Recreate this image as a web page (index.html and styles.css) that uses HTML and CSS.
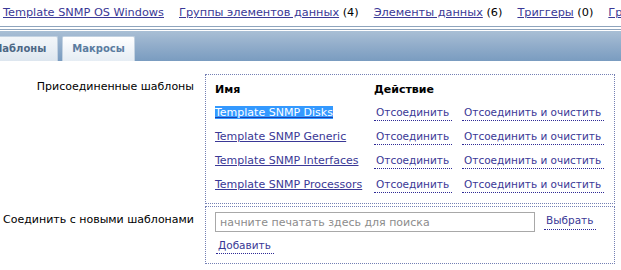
FILE: index.html
```html
<!DOCTYPE html>
<html lang="ru">
<head>
<meta charset="utf-8">
<title>Template SNMP OS Windows</title>
<link rel="stylesheet" href="styles.css">
</head>
<body>
<div class="topnav">
  <span class="navitem"><a class="navlink" href="#">Template SNMP OS Windows</a></span>
  <span class="navitem"><a class="navlink" href="#">Группы элементов данных</a> (4)</span>
  <span class="navitem"><a class="navlink" href="#">Элементы данных</a> (6)</span>
  <span class="navitem"><a class="navlink" href="#">Триггеры</a> (0)</span>
  <span class="navitem"><a class="navlink" href="#">Графики</a> (1)</span>
</div>
<div class="rule"></div>
<div class="tabbar">
  <div class="tab tab-active">Шаблоны</div>
  <div class="tab">Макросы</div>
</div>
<div class="form">
  <div class="frow">
    <div class="flabel flabel-first">Присоединенные шаблоны</div>
    <div class="fbox box-linked">
      <div class="ltable">
        <div class="th">Имя</div>
        <div class="th th-span">Действие</div>

        <div class="td"><a class="tlink tlink-selected" href="#">Template SNMP Disks</a></div>
        <div class="td"><a class="alink" href="#">Отсоединить</a></div>
        <div class="td"><a class="alink" href="#">Отсоединить и очистить</a></div>

        <div class="td"><a class="tlink" href="#">Template SNMP Generic</a></div>
        <div class="td"><a class="alink" href="#">Отсоединить</a></div>
        <div class="td"><a class="alink" href="#">Отсоединить и очистить</a></div>

        <div class="td"><a class="tlink" href="#">Template SNMP Interfaces</a></div>
        <div class="td"><a class="alink" href="#">Отсоединить</a></div>
        <div class="td"><a class="alink" href="#">Отсоединить и очистить</a></div>

        <div class="td"><a class="tlink" href="#">Template SNMP Processors</a></div>
        <div class="td"><a class="alink" href="#">Отсоединить</a></div>
        <div class="td"><a class="alink" href="#">Отсоединить и очистить</a></div>
      </div>
    </div>
  </div>
  <div class="frow frow-second">
    <div class="flabel flabel-second">Соединить с новыми шаблонами</div>
    <div class="fbox box-new">
      <div class="searchrow">
        <input class="search" type="text" placeholder="начните печатать здесь для поиска">
        <a class="alink" href="#">Выбрать</a>
      </div>
      <div class="addrow"><a class="alink" href="#">Добавить</a></div>
    </div>
  </div>
</div>
</body>
</html>
```

FILE: styles.css
```css
html, body {
  margin: 0;
  padding: 0;
  background: #ffffff;
}
body {
  font-family: "DejaVu Sans", Verdana, sans-serif;
  font-size: 11px;
  line-height: 13px;
  color: #000000;
  overflow: hidden;
  width: 621px;
  height: 270px;
}
a {
  color: #3a3896;
}

/* top navigation */
.topnav {
  box-sizing: border-box;
  height: 26px;
  padding: 6px 0 0 3px;
  display: flex;
  gap: 15px;
  white-space: nowrap;
  font-size: 11.3px;
  overflow: hidden;
}
.navitem {
  flex-shrink: 0;
}
.navlink {
  text-decoration: underline;
}

.rule {
  border-top: 1px solid #8ea4bd;
  border-bottom: 1px solid #8ea4bd;
  margin-bottom: 1px;
  padding-top: 2px;
  height: 0;
  box-sizing: content-box;
}

/* tabs */
.tabbar {
  height: 30px;
  box-sizing: border-box;
  background: linear-gradient(to bottom, #a9bfd5 0%, #93aecb 45%, #7a9cc0 100%);
  display: flex;
  align-items: flex-end;
  gap: 4px;
  overflow: hidden;
}
.tab {
  box-sizing: border-box;
  height: 25px;
  line-height: 24px;
  padding: 0 9px;
  font-size: 10px;
  font-weight: bold;
  color: #5b7ca0;
  background: linear-gradient(to bottom, #ffffff 0%, #f1f5f9 50%, #e6edf4 100%);
  border: 1px solid #c3d2e1;
  border-bottom: none;
  border-radius: 2px 2px 0 0;
  white-space: nowrap;
  flex-shrink: 0;
}
.tab-active {
  margin-left: -20px;
  padding-right: 11px;
  color: #4c6785;
  background: linear-gradient(to bottom, #f3f6f9 0%, #e9eff5 50%, #dde6ef 100%);
}

/* form */
.form {
  padding-top: 13px;
}
.frow {
  display: flex;
  align-items: flex-start;
}
.frow-second {
  margin-top: 2px;
}
.flabel {
  box-sizing: border-box;
  width: 194px;
  text-align: right;
  white-space: nowrap;
  margin-right: 11px;
}
.flabel-first {
  padding-top: 6px;
}
.flabel-second {
  padding-top: 7px;
}
.fbox {
  box-sizing: border-box;
  width: 410px;
  border: 1px dotted #7480b4;
}
.box-linked {
  padding: 8px 9px 1px 9px;
}
.ltable {
  display: grid;
  grid-template-columns: 159px 88px auto;
  grid-template-rows: 23px repeat(4, 24px);
}
.th {
  font-weight: bold;
}
.th-span {
  grid-column: 2 / span 2;
}
.td {
  white-space: nowrap;
}
.tlink {
  text-decoration: underline;
}
.tlink-selected {
  background: #3399ff;
  color: #ffffff;
  text-decoration-color: #1c3fae;
}
.alink {
  font-size: 10.5px;
  text-decoration: none;
  padding: 0 3px 2px 2px;
  border-bottom: 1px dotted #2e2a96;
}

.box-new {
  padding: 5px 9px 11px 9px;
}
.searchrow {
  display: flex;
  align-items: center;
  gap: 9px;
}
.search {
  box-sizing: border-box;
  width: 320px;
  height: 20px;
  margin: 0;
  padding: 0 4px;
  border: 1px solid #a8a8a8;
  font-family: "DejaVu Sans", Verdana, sans-serif;
  font-size: 11px;
  color: #000;
  outline: none;
}
.search::placeholder {
  color: #8c8c8c;
}
.addrow {
  margin-top: 7px;
  padding-left: 1px;
}
```
